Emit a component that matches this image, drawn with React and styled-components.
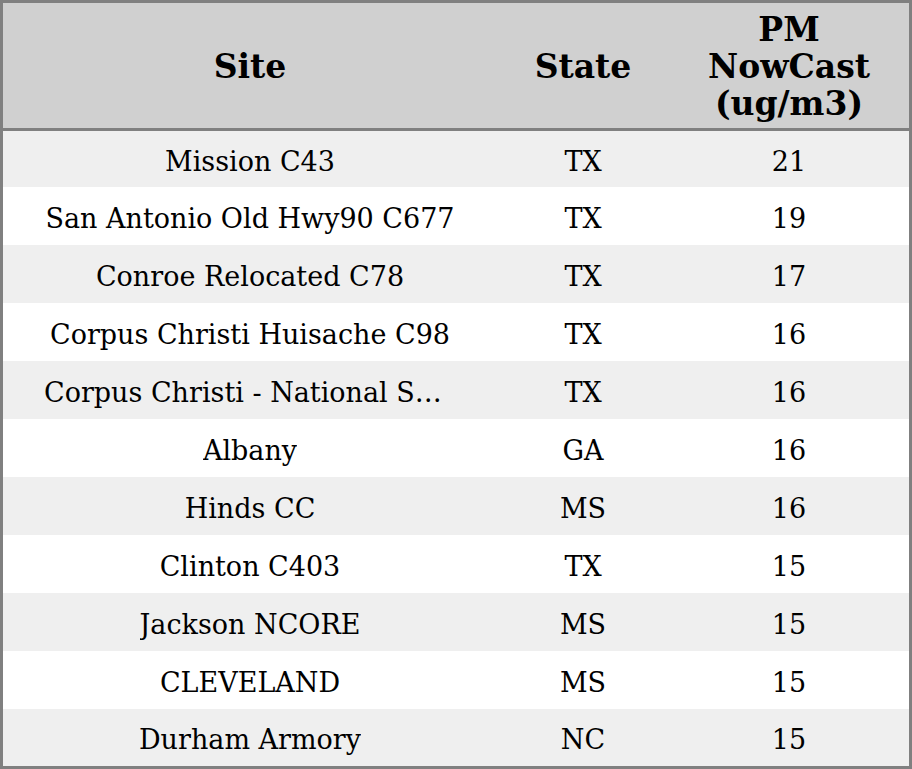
import React from "react";
import styled, { createGlobalStyle } from "styled-components";

const GlobalStyle = createGlobalStyle`
  html, body {
    margin: 0;
    padding: 0;
    background: #ffffff;
  }
  body {
    font-family: "DejaVu Serif", serif;
    color: #000000;
  }
`;

const Table = styled.div`
  width: 912px;
  height: 769px;
  box-sizing: border-box;
  border: 3px solid #808080;
  display: grid;
  grid-template-columns: 494px 172px 240px;
  grid-template-rows: 128px 56px repeat(9, 58px) 57px;
`;

const HeadCell = styled.div`
  background: #d0d0d0;
  border-bottom: 3px solid #808080;
  display: flex;
  align-items: center;
  justify-content: center;
  text-align: center;
  font-weight: bold;
  font-size: 33px;
  line-height: 37px;
  padding-top: 2px;
`;

const Cell = styled.div`
  background: ${props => (props.$even ? "#efefef" : "#ffffff")};
  display: flex;
  align-items: center;
  justify-content: center;
  font-size: 27px;
  white-space: nowrap;
  min-width: 0;
  padding-top: 4px;
  box-sizing: border-box;
`;

const Label = styled.span`
  overflow: hidden;
  text-overflow: ellipsis;
  white-space: nowrap;
  max-width: ${props => props.$max || "none"};
`;

const rows = [
  ["Mission C43", "TX", 21],
  ["San Antonio Old Hwy90 C677", "TX", 19],
  ["Conroe Relocated C78", "TX", 17],
  ["Corpus Christi Huisache C98", "TX", 16],
  ["Corpus Christi - National Seashore", "TX", 16],
  ["Albany", "GA", 16],
  ["Hinds CC", "MS", 16],
  ["Clinton C403", "TX", 15],
  ["Jackson NCORE", "MS", 15],
  ["CLEVELAND", "MS", 15],
  ["Durham Armory", "NC", 15],
];

const App = () => {
  return (
    <>
      <GlobalStyle />
      <Table>
        <HeadCell>Site</HeadCell>
        <HeadCell>State</HeadCell>
        <HeadCell>
          PM
          <br />
          NowCast
          <br />
          (ug/m3)
        </HeadCell>
        {rows.map(([site, state, value], i) => (
          <React.Fragment key={site}>
            <Cell $even={i % 2 === 0}>
              <Label $max="412px">{site}</Label>
            </Cell>
            <Cell $even={i % 2 === 0}>{state}</Cell>
            <Cell $even={i % 2 === 0}>{value}</Cell>
          </React.Fragment>
        ))}
      </Table>
    </>
  );
};

export default App;
